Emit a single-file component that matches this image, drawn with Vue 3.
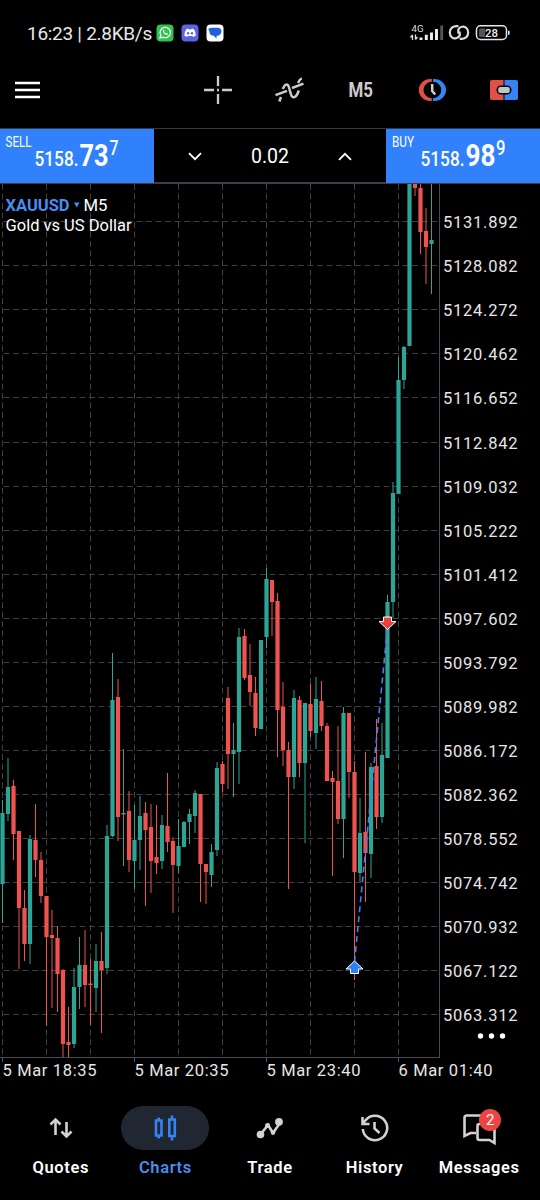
<script setup>
import { ref } from 'vue';

const activeTab = ref('Charts');
const tabs = ['Quotes', 'Charts', 'Trade', 'History', 'Messages'];

const prices = [
    '5131.892', '5128.082', '5124.272', '5120.462', '5116.652', '5112.842', '5109.032',
    '5105.222', '5101.412', '5097.602', '5093.792', '5089.982', '5086.172', '5082.362',
    '5078.552', '5074.742', '5070.932', '5067.122', '5063.312'
];
const times = ['5 Mar 18:35', '5 Mar 20:35', '5 Mar 23:40', '6 Mar 01:40'];

// [direction, high, body top, body bottom, low]
const candles = [
    ['up', 800, 813, 884, 923], ['up', 758, 787, 814, 821], ['down', 780, 786, 834, 860],
    ['down', 831, 831, 908, 969], ['down', 890, 908, 944, 961], ['up', 835, 839, 944, 964],
    ['down', 804, 840, 860, 877], ['down', 852, 860, 896, 903], ['down', 896, 896, 937, 1026],
    ['down', 910, 935, 938, 1008], ['down', 926, 938, 974, 1012], ['down', 969, 970, 1044, 1057],
    ['down', 1007, 1042, 1045, 1057], ['up', 968, 987, 1044, 1048], ['up', 937, 965, 987, 1009],
    ['down', 930, 965, 985, 1007], ['down', 959, 983.5, 985, 1025], ['up', 944, 961, 988, 1012],
    ['down', 932, 961, 970, 1033], ['up', 825, 836, 968, 974], ['up', 653, 700, 836, 837],
    ['down', 679, 697, 817, 841], ['up', 749, 813, 814.5, 866], ['down', 791, 811, 860, 872],
    ['up', 805, 840, 861, 889], ['up', 796, 816, 840, 870], ['down', 802, 813, 830, 906],
    ['down', 804, 827, 861, 893], ['down', 805, 857, 863, 874], ['up', 815, 825, 861, 869],
    ['down', 773, 826, 842, 852], ['down', 837, 841, 865, 913], ['up', 819, 846, 866, 873],
    ['up', 821, 822, 847, 847], ['up', 809, 814, 822, 844], ['up', 790, 793, 816, 833],
    ['down', 794, 794, 864, 902], ['down', 864, 864, 872, 904], ['up', 844, 852, 875, 887],
    ['up', 762, 768, 850, 856], ['down', 761, 764, 784, 792], ['down', 687, 698, 754, 789],
    ['up', 723, 750, 754, 797], ['up', 628, 637, 752, 784], ['down', 629, 636, 678, 680],
    ['down', 644, 675, 692, 706], ['down', 677, 693, 728, 736], ['up', 640, 640, 729, 729],
    ['up', 568, 579, 637, 648], ['down', 580, 580, 602, 636], ['down', 593, 601, 710, 757],
    ['down', 682, 707, 750, 766], ['down', 742, 750, 777, 889], ['up', 690, 698, 777, 789],
    ['down', 696, 700, 763, 777], ['up', 703, 703, 763, 843], ['down', 684, 704, 731, 737],
    ['up', 677, 699, 733, 749], ['down', 681, 701, 726, 731], ['down', 723, 726, 781, 781],
    ['down', 771, 778, 782, 876], ['down', 726, 781, 819, 824], ['up', 707, 713, 819, 858],
    ['down', 713, 713, 772, 798], ['down', 761, 772, 872, 980], ['up', 798, 833, 873, 882],
    ['down', 752, 832, 853, 902], ['up', 763, 767, 854, 878], ['down', 719, 766, 817, 829],
    ['up', 723, 755, 817, 823], ['up', 595, 602, 758, 758], ['up', 482, 493, 602, 618],
    ['up', 357, 380, 494, 494], ['up', 346, 347, 380, 389], ['up', 184, 184, 346, 346],
    ['down', 184, 184, 188, 196], ['down', 184, 188, 232, 254], ['down', 208, 231, 247, 284],
    ['up', 184, 240, 244, 294]
];

function candleX(index) {
    return 2.5 + index * 5.5;
}

// keep the lines on half pixels so they stay crisp
function priceY(n) {
    return Math.floor(221.9 + n * 44.02) + 0.5;
}
</script>

<template>
    <div class="screen">
        <header class="status">
            <span class="status-text">16:23 | 2.8KB/s</span>
            <svg class="apps" width="68" height="18" viewBox="0 0 68 18">
                <rect x="0.5" y="0.5" width="17" height="17" rx="4" fill="#2fc351" />
                <path d="M4 14l.8-2.8a5.2 5.2 0 1 1 2 1.9z" fill="none" stroke="#fff" stroke-width="1.2" />
                <path d="M7 6.2c-.7 2 2.4 5.1 4.5 4.6l.4-1.1-1.5-.9-.8.7L8 7.8l.6-.8-.6-1.3z" fill="#fff" />
                <rect x="25.5" y="0.5" width="17" height="17" rx="4" fill="#5c63e6" />
                <path d="M30.3 5.2l2-.7.6.9h2.3l.6-.9 2 .7c1.5 2 2 4.3 1.9 6.500l-2.500 1.300-.8-1.100h-4.600l-.8 1.100-2.500-1.300c-.1-2.200.4-4.500 1.800-6.500z" fill="#fff" />
                <circle cx="32.1" cy="9.2" r="1.2" fill="#5c63e6" />
                <circle cx="36" cy="9.2" r="1.2" fill="#5c63e6" />
                <rect x="50.5" y="0.5" width="17" height="17" rx="4" fill="#fff" />
                <path d="M55 3.800h6.500c3 0 4.500 2.300 3.800 4.800-.6 2-2 3.200-4 3.200h-.6l-.4 3-2.300-3C55 12 53.200 10 53.500 7.500L52 4.800c1.200.2 2-.8 3-1z" fill="#1d62d8" />
            </svg>
            <svg class="system" width="102" height="20" viewBox="0 0 102 20">
                <text x="1.5" y="8.5" font-size="9" textLength="12" lengthAdjust="spacingAndGlyphs" fill="#ddd">4G</text>
                <path d="M2.500 12v5M.5 14.500l2-2.500M5.500 11.500v5M5.500 16.500l2-2.500" stroke="#ddd" stroke-width="1.300" fill="none" />
                <path d="M11 14.500V17M16.300 11.800V17M21.500 9.500V17M26.500 6V17" stroke="#eee" stroke-width="2.900" />
                <path d="M31.700 2.500V17" stroke="#555" stroke-width="2.900" />
                <g fill="none" stroke="#ddd" stroke-width="2.200" stroke-linecap="round">
                    <path d="M47.500 3.200C43 2.800 39.800 5.500 39.800 9.500s3.200 6.600 6.200 5.800c3.500-.8 4.200-3.500 3.700-6" />
                    <path d="M50.500 15.800c4.500.4 7.700-2.300 7.700-6.300s-3.200-6.600-6.200-5.800c-3.500.8-4.200 3.500-3.700 6" />
                </g>
                <rect x="66.500" y="2.800" width="30" height="13.700" rx="4" fill="none" stroke="#e5e5e5" stroke-width="1.500" />
                <path d="M70.500 5.500H75V14h-4.500a1.500 1.500 0 0 1-1.500-1.500V7a1.500 1.500 0 0 1 1.500-1.500z" fill="#555" />
                <path d="M98.800 7.800v4" stroke="#e5e5e5" stroke-width="1.600" />
                <text x="75" y="13.800" font-size="11.500" font-weight="500" textLength="13" lengthAdjust="spacingAndGlyphs" fill="#eee">28</text>
            </svg>
        </header>

        <nav class="toolbar">
            <svg class="burger" width="25" height="18" viewBox="0 0 25 18">
                <path d="M0 2h25M0 9h25M0 16h25" stroke="#fff" stroke-width="2.400" />
            </svg>
            <svg width="30" height="30" viewBox="0 0 30 30">
                <path d="M15 1v10M15 19v10M1 15h10M19 15h10M14 15h2" stroke="#ccc" stroke-width="2.300" />
            </svg>
            <svg width="30" height="30" viewBox="0 0 30 30" fill="none" stroke="#ccc" stroke-width="2.500">
                <path d="M1.500 20.200l11.500-4.400M5.300 26.500l1.700-4.500M8.800 14c2-5.200 5-6 6.200-1.500l2 7c1.200 4.300 5.200 4 7.800-4M18 13l11.500-4.400M24 8c1-2.300 2-4 3.800-4.700" />
            </svg>
            <svg width="30" height="30" viewBox="0 0 30 30">
                <text x="2.500" y="22.300" font-size="21" font-weight="700" textLength="24.500" lengthAdjust="spacingAndGlyphs" fill="#ccc">M5</text>
            </svg>
            <svg width="30" height="30" viewBox="0 0 30 30">
                <path d="M14.800 4h-1.500a11.500 11 0 0 0 0 22h1.500v-2.700a8.300 8.300 0 0 1 0-16.600z" fill="#e0504a" />
                <path d="M16 4h1.500a11.500 11 0 0 1 0 22H16v-2.700a8.300 8.300 0 0 0 0-16.600z" fill="#3584f4" />
                <path d="M15.200 9v7l3 3.500" fill="none" stroke="#c8d0d2" stroke-width="2.500" />
            </svg>
            <svg width="30" height="30" viewBox="0 0 30 30">
                <path d="M3 5h11.500v5.500H12a4.500 4.500 0 0 0 0 9h2.500V25H3a2 2 0 0 1-2-2V7a2 2 0 0 1 2-2z" fill="#e0504a" />
                <path d="M27 5H15.500v5.500H18a4.500 4.500 0 0 1 0 9h-2.500V25H27a2 2 0 0 0 2-2V7a2 2 0 0 0-2-2z" fill="#3584f4" />
                <rect x="9.200" y="12" width="11.600" height="6" rx="2" fill="#b9c6cc" />
            </svg>
        </nav>

        <section class="deal">
            <button class="side sell">
                <svg width="154" height="54" viewBox="0 0 154 54">
                    <text x="5.500" y="18" font-size="14" textLength="26" lengthAdjust="spacingAndGlyphs">SELL</text>
                    <text x="34.500" y="37" font-size="19.500" font-weight="500" textLength="44" lengthAdjust="spacingAndGlyphs">5158.</text>
                    <text x="79.500" y="37" font-size="30.500" font-weight="700" textLength="29" lengthAdjust="spacingAndGlyphs">73</text>
                    <text x="109.500" y="25.500" font-size="19.500" font-weight="500" textLength="9" lengthAdjust="spacingAndGlyphs">7</text>
                </svg>
            </button>
            <div class="volume">
                <svg width="14" height="9" viewBox="0 0 14 9"><path d="M1 1.200l6 6 6-6" /></svg>
                <span>0.02</span>
                <svg width="14" height="9" viewBox="0 0 14 9"><path d="M1 7.800l6-6 6 6" /></svg>
            </div>
            <button class="side buy">
                <svg width="154" height="54" viewBox="0 0 154 54">
                    <text x="6" y="18" font-size="14" textLength="22" lengthAdjust="spacingAndGlyphs">BUY</text>
                    <text x="34.500" y="37" font-size="19.500" font-weight="500" textLength="44" lengthAdjust="spacingAndGlyphs">5158.</text>
                    <text x="79.500" y="37" font-size="30.500" font-weight="700" textLength="30" lengthAdjust="spacingAndGlyphs">98</text>
                    <text x="110" y="25.500" font-size="19.500" font-weight="500" textLength="9.500" lengthAdjust="spacingAndGlyphs">9</text>
                </svg>
            </button>
        </section>

        <svg class="chart" width="540" height="900" viewBox="0 184 540 900">
            <g class="grid">
                <line v-for="n in 10" :key="'v' + n" :x1="n * 44 - 41.5" :x2="n * 44 - 41.5" y1="184" y2="1058" />
                <line v-for="(price, n) in prices" :key="price" x1="-6" x2="440" :y1="priceY(n)" :y2="priceY(n)" />
            </g>

            <g v-for="(candle, index) in candles" :key="index" :class="candle[0]">
                <line :x1="candleX(index)" :x2="candleX(index)" :y1="candle[1]" :y2="candle[4]" />
                <rect :x="candleX(index) - 2.1" :y="candle[2]" width="4.2" :height="candle[3] - candle[2]" />
            </g>

            <path class="frame" d="M439.500 184V1057.500M0 1057.500H440" />
            <path class="ticks" d="M2.500 1058v4M134.500 1058v4M266.500 1058v4M398.500 1058v4" />

            <!-- closed position -->
            <line class="deal-line" x1="354.500" y1="962" x2="387.500" y2="628" />
            <path class="arrow" d="M383.500 617h8v4.500h4.500l-8.500 8-8.500-8h4.500z" fill="#e8443f" />
            <path class="arrow" d="M350.500 973.500h8v-4.500h4.500l-8.500-8-8.500 8h4.500z" fill="#2f80f5" />

            <g class="title">
                <text x="5.500" y="210.500" font-weight="700" textLength="64" lengthAdjust="spacingAndGlyphs" fill="#4a8df0">XAUUSD</text>
                <path d="M74 202.500h5.500l-2.700 5z" fill="#4a8df0" />
                <text x="83.500" y="210.500" textLength="24" lengthAdjust="spacingAndGlyphs">M5</text>
                <text x="5.500" y="231" textLength="126" lengthAdjust="spacingAndGlyphs">Gold vs US Dollar</text>
            </g>

            <g class="axis">
                <text v-for="(price, n) in prices" :key="price" x="443" :y="priceY(n) + 6" textLength="74.500">{{ price }}</text>
                <text v-for="(time, n) in times" :key="time" :x="2.5 + n * 132" y="1075.500" textLength="94">{{ time }}</text>
            </g>

            <g fill="#fff">
                <circle cx="480.500" cy="1036" r="2.700" />
                <circle cx="491.500" cy="1036" r="2.700" />
                <circle cx="502.500" cy="1036" r="2.700" />
            </g>
        </svg>

        <footer class="tabs">
            <button v-for="tab in tabs" :key="tab" class="tab" :class="{ active: tab === activeTab }" @click="activeTab = tab">
                <span class="pill">
                    <svg v-if="tab === 'Quotes'" width="30" height="30" viewBox="0 0 30 30">
                        <path d="M9.500 22V7M4.500 11.500l5-5 5 5M20.500 9v14M15.500 18.500l5 5 5-5" />
                    </svg>
                    <svg v-else-if="tab === 'Charts'" width="30" height="30" viewBox="0 0 30 30">
                        <path d="M6 7.500h5.500v15H6zM8.700 4.500v3M8.700 22.500v3M19.300 6.500h5.500v16.500h-5.500zM22 2.500v4M22 23v4.500" />
                    </svg>
                    <svg v-else-if="tab === 'Trade'" width="30" height="30" viewBox="0 0 30 30">
                        <path d="M5.500 21.500l7.500-9.500 5 8 7-10" />
                        <g fill="currentColor" stroke="none">
                            <circle cx="5.500" cy="21.500" r="3.800" />
                            <circle cx="12.500" cy="12.500" r="2.500" />
                            <circle cx="18" cy="19.500" r="2.300" />
                            <circle cx="24" cy="8.800" r="3.900" />
                        </g>
                    </svg>
                    <svg v-else-if="tab === 'History'" width="30" height="30" viewBox="0 0 30 30">
                        <path d="M2.800 16a12.200 12.200 0 1 0 2.500-8.500L2.500 11M2.500 4v7h7M14.500 9v6.500l5 4.500" />
                    </svg>
                    <svg v-else width="36" height="34" viewBox="0 0 36 34">
                        <path d="M15 22H9.500L3.500 25V6.500a2 2 0 0 1 2-2H22a2 2 0 0 1 2 2v6" />
                        <path d="M18.500 13h13a2 2 0 0 1 2 2v17L28.500 29h-10a2 2 0 0 1-2-2V15a2 2 0 0 1 2-2z" />
                    </svg>
                    <span v-if="tab === 'Messages'" class="badge">2</span>
                </span>
                <span class="tab-name">{{ tab }}</span>
            </button>
        </footer>
    </div>
</template>

<style>
body {
    background: #000;
}
</style>

<style scoped>
.screen {
    width: 540px;
    height: 1200px;
    display: flex;
    flex-direction: column;
    overflow: hidden;
    background: #000;
    color: #fff;
    font-family: Roboto, "Liberation Sans", sans-serif;
}

svg {
    display: block;
    flex-shrink: 0;
}

.toolbar svg {
    overflow: visible;
}

button {
    padding: 0;
    border: 0;
    background: none;
    color: inherit;
    font: inherit;
}

.status {
    height: 66px;
    box-sizing: border-box;
    padding: 0 28px 0 27px;
    display: flex;
    align-items: center;
}

.status-text {
    width: 129px;
    font-size: 19px;
    letter-spacing: -0.28px;
    line-height: 22px;
    padding-top: 1px;
    white-space: nowrap;
    color: #e8e8e8;
}

.system {
    margin-left: auto;
}

.toolbar {
    height: 48px;
    margin-bottom: 14px;
    padding: 0 21px 0 15px;
    display: flex;
    align-items: center;
    gap: 41.6px;
}

.burger {
    margin-right: 121px;
}

.deal {
    height: 56px;
    box-sizing: border-box;
    display: flex;
    border-top: 1px solid #34383f;
    border-bottom: 2px solid #3c3f48;
}

.side {
    width: 154px;
    height: 54px;
    flex-shrink: 0;
    background: #3081fb;
    fill: #fff;
}

.volume {
    flex: 1;
    display: flex;
    align-items: center;
    justify-content: space-between;
    padding: 2px 34px 0;
    font-size: 19.5px;
}

.volume path {
    fill: none;
    stroke: #fff;
    stroke-width: 1.8;
}

.grid line {
    stroke: #404040;
    stroke-width: 1;
    stroke-dasharray: 6 3.5;
}

.up line {
    stroke: #2ea495;
}

.up rect {
    fill: #2ea495;
}

.down line {
    stroke: #ee5350;
}

.down rect {
    fill: #ee5350;
}

.frame {
    fill: none;
    stroke: #4b4a55;
}

.ticks {
    stroke: #55555c;
}

.deal-line {
    stroke: #4a7df5;
    stroke-width: 1.6;
    stroke-dasharray: 6 4;
}

.arrow {
    stroke: #fff;
    stroke-width: 1;
}

.title {
    font-size: 16.5px;
    fill: #fff;
}

.axis {
    font-size: 16.5px;
    fill: #e6e6e6;
}

.tabs {
    height: 116px;
    padding: 0 8.5px;
    display: flex;
}

.tab {
    flex: 1;
    display: flex;
    flex-direction: column;
    align-items: center;
    padding-top: 22px;
}

.pill {
    position: relative;
    width: 88px;
    height: 44px;
    display: flex;
    align-items: center;
    justify-content: center;
    border-radius: 22px;
    color: #d2d2d2;
}

.pill path {
    fill: none;
    stroke: currentColor;
    stroke-width: 2.6;
}

.active .pill {
    background: #202732;
    color: #3584f4;
}

.tab-name {
    margin-top: 7px;
    font-size: 16.5px;
    line-height: 22px;
    font-weight: 600;
    letter-spacing: 0.6px;
}

.active .tab-name {
    color: #4a8df0;
}

.badge {
    position: absolute;
    left: 44px;
    top: 3px;
    width: 22px;
    height: 22px;
    border-radius: 50%;
    background: #ee4444;
    color: #fff;
    font-size: 15px;
    line-height: 22px;
    text-align: center;
}
</style>
